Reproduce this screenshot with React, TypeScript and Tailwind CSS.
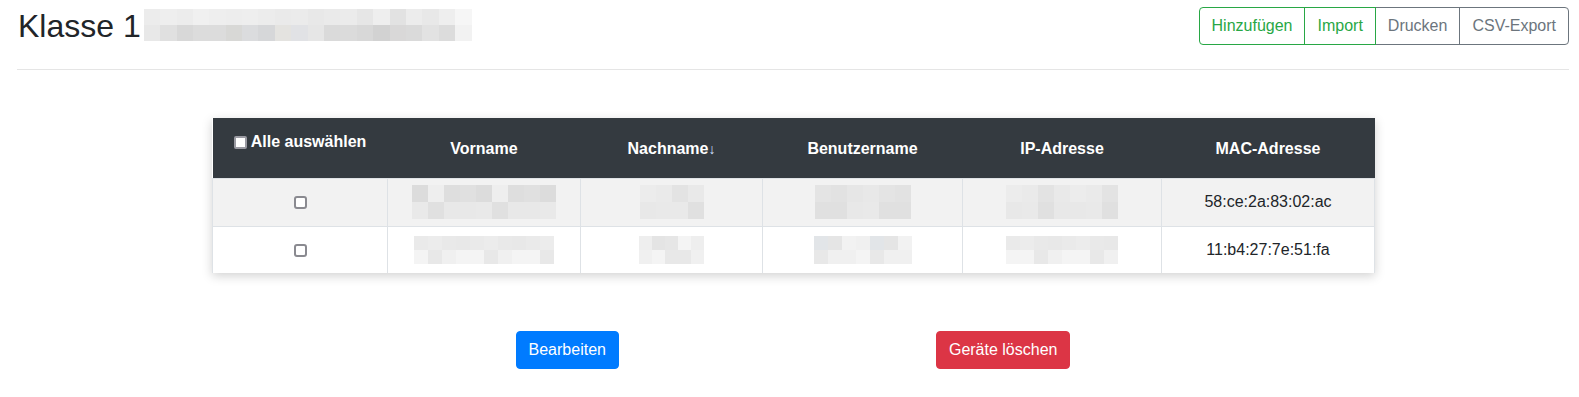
import React from "react";

const shadesA = ["#e4e4e4", "#e9e9e9", "#dedede", "#e2e2e2", "#ececec", "#e0e0e0", "#e6e6e6", "#eaeaea", "#dcdcdc", "#e8e8e8", "#e3e3e3", "#eeeeee"];
const shadesB = ["#eeeeee", "#e8e8e8", "#f2f2f2", "#e4e4e4", "#eaeaea", "#f0f0f0", "#e6e6e6", "#ececec", "#e2e5e8", "#f4f4f4", "#e9e9e9", "#e5e5e5"];

function Blur({ cols, rows, bw, bh, seed, light }: { cols: number; rows: number; bw: number; bh: number; seed: number; light?: boolean }) {
  const pal = light ? shadesB : shadesA;
  const cells = [];
  for (let r = 0; r < rows; r++) {
    for (let c = 0; c < cols; c++) {
      const idx = (seed * 7 + r * 5 + c * 3 + ((c * r + seed) % 4)) % pal.length;
      cells.push(<div key={r + "-" + c} style={{ width: bw, height: bh, background: pal[idx] }} />);
    }
  }
  return (
    <div className="inline-grid align-middle" style={{ gridTemplateColumns: `repeat(${cols}, ${bw}px)` }}>
      {cells}
    </div>
  );
}

function TitleBlur() {
  const top = ["#ececec", "#eeeeee", "#ececec", "#f0f0f0", "#eeeeee", "#ededed", "#eeeeee", "#ececec", "#eaeaea", "#ebebeb", "#e8e8e8", "#eaeaea", "#ebebeb", "#e6e6e6", "#eeeeee", "#e2e2e2", "#ececec", "#e8e8e8", "#eeeeee", "#f6f6f6"];
  const bot = ["#e8e8e8", "#e0e0e0", "#d8d8d8", "#dcdcdc", "#dcdcdc", "#d8d8d6", "#dbdcde", "#d6d7d9", "#e4e3e0", "#e1e2e5", "#e6e6e6", "#dadada", "#dbdbdb", "#d8d8d8", "#d2d2d2", "#d9d8d8", "#dadada", "#e2e2e2", "#dcdcdc", "#f2f2f2"];
  return (
    <div className="grid" style={{ gridTemplateColumns: "repeat(20, 16.4px)" }}>
      {top.map((c, i) => (
        <div key={"t" + i} className="h-[16px]" style={{ background: c }} />
      ))}
      {bot.map((c, i) => (
        <div key={"b" + i} className="h-[16px]" style={{ background: c }} />
      ))}
    </div>
  );
}

function Check() {
  return <span className="inline-block w-[13px] h-[13px] rounded-[3px] border-2 border-[#8a8a90] bg-white align-middle" />;
}

export default function App() {
  const rows = [
    { mac: "58:ce:2a:83:02:ac", bg: "bg-[#f2f2f2]", light: false, h: "h-[48px]", bh: 17, blur: [[9, 16], [4, 16], [6, 16], [7, 16]] },
    { mac: "11:b4:27:7e:51:fa", bg: "bg-white", light: true, h: "h-[47px]", bh: 14, blur: [[10, 14], [5, 13], [7, 14], [8, 14]] },
  ];
  return (
    <div className="min-h-[397px] bg-white pl-[17px] pr-[10px] text-[16px] text-[#212529]" style={{ fontFamily: '"Liberation Sans", Arial, sans-serif' }}>
      <div className="flex items-start justify-between pt-[7px] h-[45px]">
        <div className="flex items-start">
          <h2 className="text-[32px] leading-[38px] font-normal text-[#212529] pl-[1px]">Klasse 1</h2>
          <div className="ml-[3px] mt-[2px]">
            <TitleBlur />
          </div>
        </div>
        <div className="flex h-[38px]">
          <button className="px-[12px] h-[38px] border border-[#28a745] text-[#28a745] rounded-l-[4px] leading-[24px]">Hinzufügen</button>
          <button className="px-[12px] h-[38px] border border-[#28a745] -ml-px text-[#28a745] leading-[24px] relative z-10">Import</button>
          <button className="px-[12px] h-[38px] border border-[#6c757d] -ml-px text-[#6c757d] leading-[24px]">Drucken</button>
          <button className="px-[12px] h-[38px] border border-[#6c757d] -ml-px text-[#6c757d] rounded-r-[4px] leading-[24px]">CSV-Export</button>
        </div>
      </div>
      <hr className="mt-[24px] border-0 border-t border-[#e5e5e5]" />
      <div className="w-[1162px] mx-auto mt-[48px]">
        <table className="w-full table-fixed border-collapse shadow-[0_3px_10px_rgba(0,0,0,0.18)]">
          <colgroup>
            <col className="w-[175px]" />
            <col className="w-[193px]" />
            <col className="w-[182px]" />
            <col className="w-[200px]" />
            <col className="w-[199px]" />
            <col className="w-[213px]" />
          </colgroup>
          <thead>
            <tr className="bg-[#343a40] text-white h-[60px]">
              <th className="align-top pt-[12px] font-bold leading-[24px] text-center">
                <span className="inline-flex items-center gap-[4px]">
                  <span className="inline-block w-[13px] h-[13px] rounded-[2px] border-2 border-[#9a9aa2] bg-white" />
                  Alle auswählen
                </span>
              </th>
              <th className="font-bold text-center align-middle pt-[2px]">Vorname</th>
              <th className="font-bold text-center align-middle pt-[2px]">
                Nachname<span className="text-[#cfe2ff] text-[14px] font-normal">↓</span>
              </th>
              <th className="font-bold text-center align-middle pt-[2px]">Benutzername</th>
              <th className="font-bold text-center align-middle pt-[2px]">IP-Adresse</th>
              <th className="font-bold text-center align-middle pt-[2px]">MAC-Adresse</th>
            </tr>
          </thead>
          <tbody>
            {rows.map((r, i) => (
              <tr key={i} className={r.bg + " " + r.h}>
                <td className="text-center align-middle border-t border-l border-[#dee2e6]">
                  <Check />
                </td>
                {r.blur.map((b, j) => (
                  <td key={j} className="text-center align-middle border-t border-l border-[#dee2e6]">
                    <Blur cols={b[0]} rows={2} bw={b[1]} bh={r.bh} seed={i * 3 + j + 1} light={r.light} />
                  </td>
                ))}
                <td className="text-center align-middle border-t border-l border-r border-[#dee2e6] leading-[24px]">{r.mac}</td>
              </tr>
            ))}
          </tbody>
        </table>
        <div className="flex justify-center gap-[317px] mt-[58px]">
          <button className="h-[38px] px-[12px] bg-[#007bff] border border-[#007bff] text-white rounded-[4px] leading-[24px]">Bearbeiten</button>
          <button className="h-[38px] px-[12px] bg-[#dc3545] border border-[#dc3545] text-white rounded-[4px] leading-[24px]">Geräte löschen</button>
        </div>
      </div>
    </div>
  );
}
